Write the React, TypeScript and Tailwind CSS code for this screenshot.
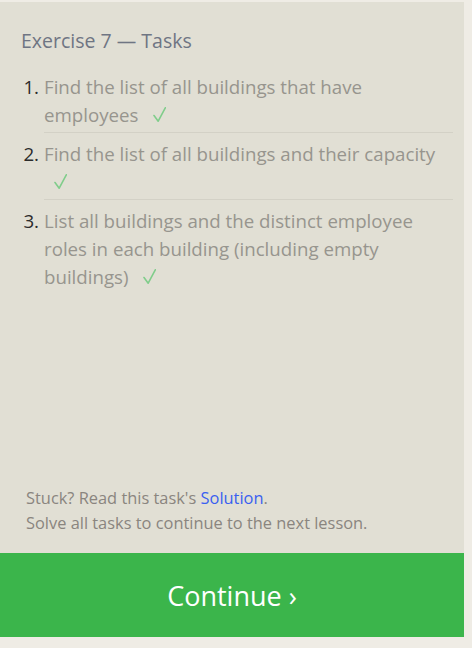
import React from 'react';

const tasks = [
  'Find the list of all buildings that have employees',
  'Find the list of all buildings and their capacity',
  'List all buildings and the distinct employee roles in each building (including empty buildings)',
];

const Check: React.FC = () => (
  <span className="pl-[10px] inline-block">
    <svg width="13" height="15" viewBox="0 0 13 15" className="inline-block align-baseline">
      <path d="M1 8.5 L5.2 14.2 L12.3 0.8" fill="none" stroke="#80cd8b" strokeWidth="1.6" strokeLinecap="round" strokeLinejoin="round" />
    </svg>
  </span>
);

const App: React.FC = () => {
  return (
    <div className="w-[472px] h-[648px] bg-[#efece5] pt-[2px] font-['Open_Sans',sans-serif]">
      <div className="w-[464px] h-[635px] bg-[#e1dfd4] flex flex-col">
        {/* Task list */}
        <div className="flex-1 pl-[21px] pr-[11px] pt-[25px]">
          <h2 className="text-[19.5px] leading-[28px] text-[#6f7583]">Exercise 7 — Tasks</h2>
          <div className="mt-[11px]">
            {tasks.map((task, i) => (
              <div key={i} className="flex">
                <span className="w-[23px] shrink-0 text-right pr-[5px] text-[18.7px] leading-[28px] text-[#2b2b2b] pt-[7px]">
                  {i + 1}.
                </span>
                <div
                  className={`flex-1 text-[18.7px] leading-[28px] text-[#97958e] pt-[7px] pb-[3px] ${
                    i < tasks.length - 1 ? 'border-b border-[#d3d1c6]' : ''
                  }`}
                >
                  {task} <Check />
                </div>
              </div>
            ))}
          </div>
        </div>

        {/* Footer hint */}
        <div className="px-[26px] pb-[18px] text-[16.4px] leading-[25px] text-[#8a857f]">
          <p>
            Stuck? Read this task's <a className="text-[#3a5ff0]">Solution</a>.
          </p>
          <p>Solve all tasks to continue to the next lesson.</p>
        </div>

        {/* Continue button */}
        <button className="h-[84px] w-full bg-[#3bb54b] text-white text-[27px] pt-[3px] flex items-center justify-center">
          Continue ›
        </button>
      </div>
    </div>
  );
};

export default App;
